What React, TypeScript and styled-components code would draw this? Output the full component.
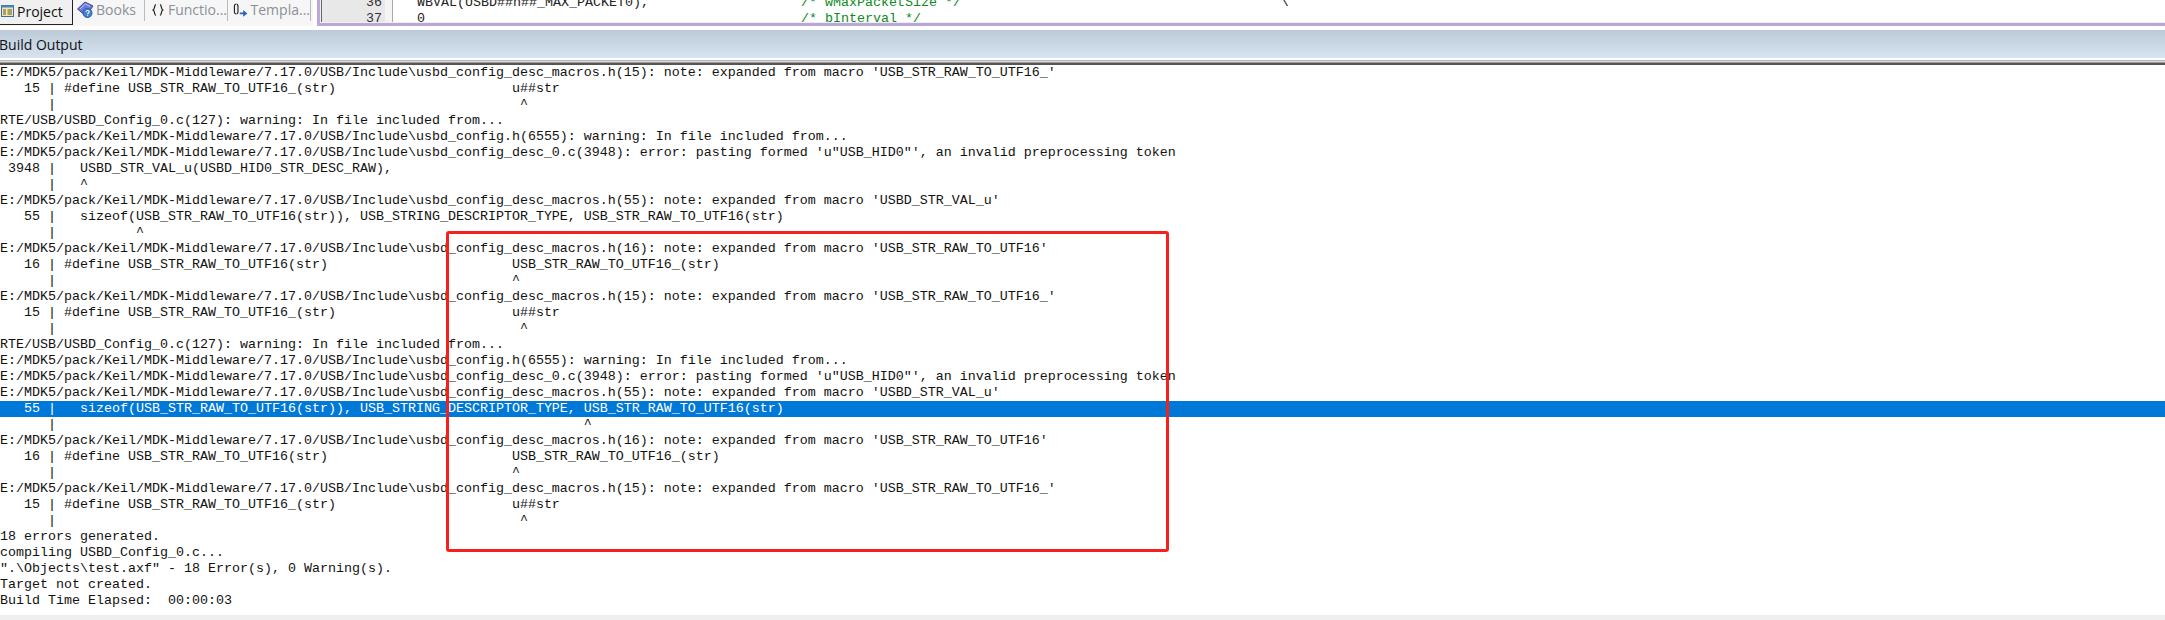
import React from "react";
import styled, { createGlobalStyle } from "styled-components";

const Global = createGlobalStyle`
  html, body { margin: 0; padding: 0; background: #fff; overflow: hidden; }
  #root { width: 2165px; height: 620px; }
`;

const Page = styled.div`
  position: relative;
  width: 2165px;
  height: 620px;
  display: flex;
  flex-direction: column;
  background: #fff;
  overflow: hidden;
`;

const TopArea = styled.div`
  height: 30px;
  display: flex;
  align-items: flex-start;
  flex: none;
`;

const TabStrip = styled.div`
  width: 313px;
  height: 26px;
  background: #f6f6f6;
  display: flex;
  flex: none;
`;

const Tab = styled.div<{ $active?: boolean; $w: number; $gap: number; $pad: number }>`
  width: ${(p) => p.$w}px;
  height: ${(p) => (p.$active ? 25 : 21)}px;
  box-sizing: border-box;
  display: flex;
  align-items: center;
  gap: ${(p) => p.$gap}px;
  padding-left: ${(p) => p.$pad}px;
  padding-bottom: 2px;
  font: 14px "Open Sans", "Noto Sans", sans-serif;
  color: ${(p) => (p.$active ? "#111" : "#8b9098")};
  background: ${(p) => (p.$active ? "#f0f0f0" : "transparent")};
  border-right: 1px solid ${(p) => (p.$active ? "#222" : "#bbb")};
  border-bottom: ${(p) => (p.$active ? "1px solid #222" : "none")};
  white-space: nowrap;
`;

const Editor = styled.div`
  margin-left: 4px;
  flex: 1;
  height: 26px;
  box-sizing: border-box;
  background: #eee;
  border-left: 3px solid #b9a8d8;
  border-bottom: 3px solid #b9a8d8;
  display: flex;
  overflow: hidden;
  font: 13.33px/16px "Liberation Mono", monospace;
`;

const Gutter = styled.div`
  width: 64px;
  flex: none;
  margin-left: 1px;
  background: #e8e8e8;
  border-left: 1px solid #666;
  color: #333;
  text-align: right;
  padding-right: 3px;
  box-sizing: border-box;
  margin-top: -5px;
  height: 27px;
`;

const FoldMargin = styled.div`
  width: 8px;
  flex: none;
  background: #f4f4f4;
  border-right: 1px solid #aaa;
  box-sizing: border-box;
  height: 22px;
`;

const CodeArea = styled.div`
  flex: 1;
  background: #fff;
  padding-left: 24px;
  margin-top: -5px;
  height: 27px;
`;

const CodeRow = styled.div`
  height: 16px;
  display: flex;
  white-space: pre;
  color: #222;
`;

const Comment = styled.span`
  color: #0a8a20;
`;

const PanelHeader = styled.div`
  height: 28px;
  flex: none;
  background: linear-gradient(#bccad8, #d7e3f0);
  display: flex;
  align-items: center;
  font: 14px "Open Sans", "Noto Sans", sans-serif;
  color: #111;
  text-indent: -1px;
`;

const Rule = styled.div`
  height: 7px;
  flex: none;
  box-sizing: border-box;
  background: linear-gradient(
    #fff 0, #fff 2px, #b4b4b4 2px, #b4b4b4 3px, #dcdcdc 3px, #dcdcdc 4px, #9a9a9a 4px, #9a9a9a 5px, #555 5px, #555 7px
  );
`;

const Output = styled.div`
  flex: 1;
  font: 13.33px/16px "Liberation Mono", monospace;
  color: #111;
  white-space: pre;
`;

const Row = styled.div<{ $selected?: boolean }>`
  height: 16px;
  background: ${(p) => (p.$selected ? "#0078d7" : "transparent")};
  color: ${(p) => (p.$selected ? "#fff" : "inherit")};
`;

const Footer = styled.div`
  height: 5px;
  flex: none;
  background: #efefef;
`;

const RedBox = styled.div`
  position: absolute;
  left: 446px;
  top: 231px;
  width: 723px;
  height: 321px;
  box-sizing: border-box;
  border: 3px solid #f5211d;
  border-radius: 3px;
`;

const BASE = "E:/MDK5/pack/Keil/MDK-Middleware/7.17.0/USB/Include\\";
const P16 = BASE + "usbd_config_desc_macros.h(16): note: expanded from macro 'USB_STR_RAW_TO_UTF16'";
const P15 = BASE + "usbd_config_desc_macros.h(15): note: expanded from macro 'USB_STR_RAW_TO_UTF16_'";
const P55 = BASE + "usbd_config_desc_macros.h(55): note: expanded from macro 'USBD_STR_VAL_u'";
const D15 = "   15 | #define USB_STR_RAW_TO_UTF16_(str)".padEnd(64, " ") + "u##str";
const D16 = "   16 | #define USB_STR_RAW_TO_UTF16(str)".padEnd(64, " ") + "USB_STR_RAW_TO_UTF16_(str)";
const caret = (col: number) => "      |".padEnd(col, " ") + "^";
const C15 = caret(65);
const C16 = caret(64);
const RTE = "RTE/USB/USBD_Config_0.c(127): warning: In file included from...";
const W6555 = BASE + "usbd_config.h(6555): warning: In file included from...";
const E3948 = BASE + "usbd_config_desc_0.c(3948): error: pasting formed 'u\"USB_HID0\"', an invalid preprocessing token";
const L55 = "   55 |   sizeof(USB_STR_RAW_TO_UTF16(str)), USB_STRING_DESCRIPTOR_TYPE, USB_STR_RAW_TO_UTF16(str)";

const lines: string[] = [
  P15, D15, C15, RTE, W6555, E3948,
  " 3948 |   USBD_STR_VAL_u(USBD_HID0_STR_DESC_RAW),",
  caret(10),
  P55, L55,
  caret(17),
  P16, D16, C16, P15, D15, C15, RTE, W6555, E3948, P55, L55,
  caret(73),
  P16, D16, C16, P15, D15, C15,
  "18 errors generated.",
  "compiling USBD_Config_0.c...",
  "\".\\Objects\\test.axf\" - 18 Error(s), 0 Warning(s).",
  "Target not created.",
  "Build Time Elapsed:  00:00:03",
];

const ProjectIcon = () => (
  <svg width="13" height="14" viewBox="0 0 13 14">
    <rect x="0.5" y="1.5" width="12" height="11" fill="#f3e7b0" stroke="#3a6ea5" />
    <rect x="0.5" y="1.5" width="12" height="2" fill="#4a86c5" />
    <path d="M2 6h3M2 8h3M2 10h3M6.5 6h4.5M6.5 8h4.5M6.5 10h4.5" stroke="#5a5a30" />
  </svg>
);

const BooksIcon = () => (
  <svg width="17" height="18" viewBox="0 0 17 18">
    <path d="M0.5 8 L8 1 L16 5 L9 15 Z" fill="#6a78d8" stroke="#3a44a0" />
    <path d="M3 8 L8.5 3 L13 5.5" fill="none" stroke="#c4c9f2" />
    <circle cx="10.5" cy="12" r="4.5" fill="#3f86d0" stroke="#2a5aa0" />
    <path d="M9 10.8 C9 9 12.2 9 12.2 10.8 C12.2 12 10.6 12 10.6 13.2 M10.6 14.3v.8" fill="none" stroke="#fff" strokeWidth="1.1" />
  </svg>
);

const FuncIcon = () => (
  <svg width="12" height="14" viewBox="0 0 12 14" fill="none" stroke="#222" strokeWidth="1.3">
    <path d="M4 1.5 C2 1.5 3.2 6 1.2 7 C3.2 8 2 12.5 4 12.5" />
    <path d="M8 1.5 C10 1.5 8.8 6 10.8 7 C8.8 8 10 12.5 8 12.5" />
  </svg>
);

const TemplateIcon = () => (
  <svg width="15" height="16" viewBox="0 0 15 16">
    <path d="M3 2 C1 2 1.5 5 1.5 7 C1.5 9 1 12 3 12" fill="none" stroke="#222" strokeWidth="1.2" />
    <path d="M3.6 2 C5.6 2 5.1 5 5.1 7 C5.1 9 5.6 12 3.6 12" fill="none" stroke="#222" strokeWidth="1.2" />
    <path d="M7 10.5h3.5V8l4.3 3.5-4.3 3.5v-2.5H7z" fill="#2a62c8" />
  </svg>
);

export default function App() {
  return (
    <Page>
      <Global />
      <TopArea>
        <TabStrip>
          <Tab $active $w={73} $gap={3} $pad={1}><ProjectIcon />Project</Tab>
          <Tab $w={72} $gap={2} $pad={4}><BooksIcon />Books</Tab>
          <Tab $w={83} $gap={4} $pad={7}><FuncIcon />Functio...</Tab>
          <Tab $w={83} $gap={3} $pad={5}><TemplateIcon />Templa...</Tab>
        </TabStrip>
        <Editor>
          <Gutter>
            <div>36</div>
            <div>37</div>
          </Gutter>
          <FoldMargin />
          <CodeArea>
            <CodeRow>{"WBVAL(USBD##n##_MAX_PACKET0),".padEnd(48, " ")}<Comment>{"/* wMaxPacketSize */"}</Comment>{" ".repeat(40) + "\\"}</CodeRow>
            <CodeRow>{"0".padEnd(48, " ")}<Comment>{"/* bInterval */"}</Comment></CodeRow>
          </CodeArea>
        </Editor>
      </TopArea>
      <PanelHeader>Build Output</PanelHeader>
      <Rule />
      <Output>
        {lines.map((l, i) => (
          <Row key={i} $selected={i === 21}>{l}</Row>
        ))}
      </Output>
      <Footer />
      <RedBox />
    </Page>
  );
}
